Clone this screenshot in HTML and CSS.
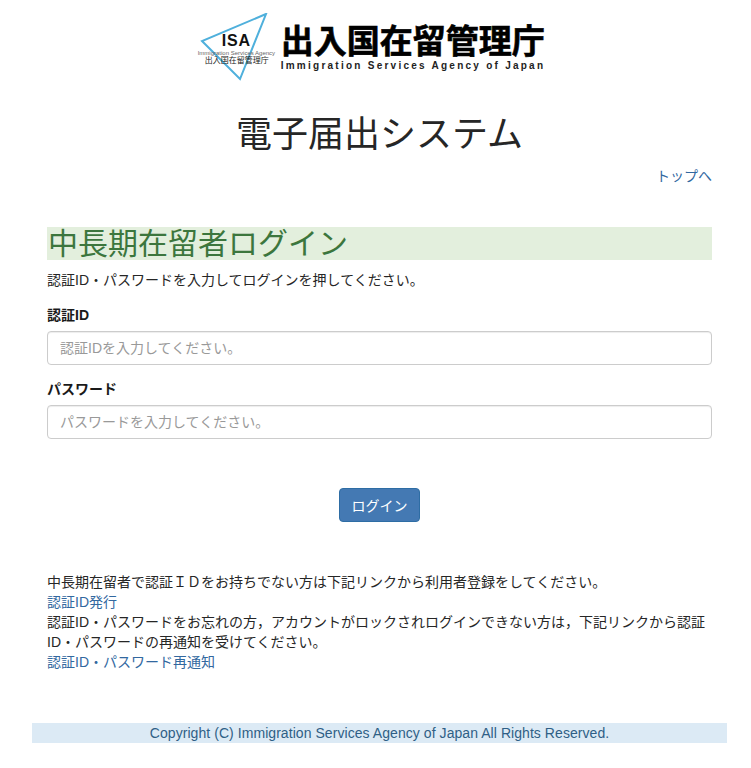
FILE: index.html
```html
<!DOCTYPE html>
<html lang="ja">
<head>
  <meta charset="UTF-8" />
  <meta name="viewport" content="width=device-width, initial-scale=1.0" />
  <title>電子届出システム</title>
  <link rel="stylesheet" href="styles.css">
</head>
<body>
  <div class="container">
    <div class="logo">
      <div class="logo-mark">
        <svg class="logo-triangle" width="76" height="68" viewBox="0 0 76 68">
          <path d="M66 1 L2 28 L40 66 Z" fill="none" stroke="#4fb0dc" stroke-width="2" />
        </svg>
        <span class="logo-isa">ISA</span>
        <span class="logo-en">Immigration Services Agency</span>
        <span class="logo-jp">出入国在留管理庁</span>
      </div>
      <div class="logo-name">
        <div class="logo-name-jp">出入国在留管理庁</div>
        <div class="logo-name-en">Immigration Services Agency of Japan</div>
      </div>
    </div>

    <h1>電子届出システム</h1>
    <div class="top-link"><a href="#">トップへ</a></div>

    <h2>中長期在留者ログイン</h2>
    <p class="lead-text">認証ID・パスワードを入力してログインを押してください。</p>

    <form>
      <div class="form-group">
        <label for="userId">認証ID</label>
        <input type="text" id="userId" class="form-control" placeholder="認証IDを入力してください。" />
      </div>
      <div class="form-group">
        <label for="password">パスワード</label>
        <input type="password" id="password" class="form-control" placeholder="パスワードを入力してください。" />
      </div>
      <div class="actions">
        <button type="button" class="btn">ログイン</button>
      </div>
    </form>

    <div class="notes">
      <div>中長期在留者で認証ＩＤをお持ちでない方は下記リンクから利用者登録をしてください。</div>
      <div><a href="#">認証ID発行</a></div>
      <div>認証ID・パスワードをお忘れの方，アカウントがロックされログインできない方は，下記リンクから認証ID・パスワードの再通知を受けてください。</div>
      <div><a href="#">認証ID・パスワード再通知</a></div>
    </div>

    <div class="footer">Copyright (C) Immigration Services Agency of Japan All Rights Reserved.</div>
  </div>
</body>
</html>
```

FILE: styles.css
```css
* {
  box-sizing: border-box;
}

body {
  margin: 0;
  font-family: "Liberation Sans", "Noto Sans CJK JP", sans-serif;
  font-size: 14px;
  line-height: 20px;
  color: #262626;
  background-color: #fff;
}

a {
  color: #32689f;
  text-decoration: none;
}

.container {
  width: 695px;
  margin-left: 32px;
  padding: 13px 15px 0;
}

.footer {
  margin: 51px -15px 0;
  height: 20px;
  background-color: #dceaf5;
  color: #2f5f86;
  text-align: center;
  letter-spacing: 0.06px;
}

.logo {
  display: flex;
  justify-content: center;
  align-items: flex-start;
  height: 68px;
  margin-left: -14px;
}

.logo-mark {
  position: relative;
  width: 81px;
  height: 68px;
  flex: none;
}

.logo-triangle {
  position: absolute;
  left: 0;
  top: 0;
}

.logo-isa {
  position: absolute;
  left: 22px;
  top: 19px;
  font-size: 16px;
  line-height: 18px;
  font-weight: bold;
  letter-spacing: 0.8px;
  color: #111;
}

.logo-en {
  position: absolute;
  left: -2px;
  top: 37px;
  font-size: 6px;
  line-height: 6px;
  color: #666;
  white-space: nowrap;
}

.logo-jp {
  position: absolute;
  left: 5px;
  top: 43px;
  font-size: 8px;
  line-height: 9px;
  color: #222;
  white-space: nowrap;
}

.logo-name-jp {
  margin-top: 11px;
  font-size: 33px;
  line-height: 36px;
  font-weight: bold;
  color: #000;
  -webkit-text-stroke: 0.6px #000;
  white-space: nowrap;
}

.logo-name-en {
  font-size: 10px;
  line-height: 12px;
  font-weight: bold;
  letter-spacing: 2.25px;
  color: #222;
  white-space: nowrap;
}

h1 {
  margin: 32px 0 0;
  font-size: 36px;
  line-height: 44px;
  font-weight: 400;
  text-align: center;
}

.top-link {
  margin-top: 9px;
  text-align: right;
}

h2 {
  margin: 41px 0 0;
  height: 33px;
  padding-left: 1px;
  font-size: 30px;
  line-height: 33px;
  font-weight: 400;
  color: #3c763d;
  background-color: #e3efdd;
}

.lead-text {
  margin: 10px 0 0;
}

.form-group {
  margin-top: 15px;
}

.form-group + .form-group {
  margin-top: 14px;
}

label {
  display: block;
  margin-bottom: 6px;
  font-weight: bold;
  color: #1a1a1a;
}

.form-control {
  display: block;
  width: 100%;
  height: 34px;
  padding: 6px 12px;
  font-family: inherit;
  font-size: 14px;
  color: #555;
  background-color: #fff;
  border: 1px solid #ccc;
  border-radius: 4px;
  box-shadow: inset 0 1px 1px rgba(0, 0, 0, 0.075);
}

.form-control::placeholder {
  color: #999;
  opacity: 1;
}

.actions {
  margin-top: 49px;
  text-align: center;
}

.btn {
  width: 81px;
  height: 34px;
  padding: 0;
  font-family: inherit;
  font-size: 14px;
  color: #fff;
  background-color: #4479b3;
  border: 1px solid #2e6da4;
  border-radius: 4px;
}

.notes {
  margin-top: 50px;
}
```
